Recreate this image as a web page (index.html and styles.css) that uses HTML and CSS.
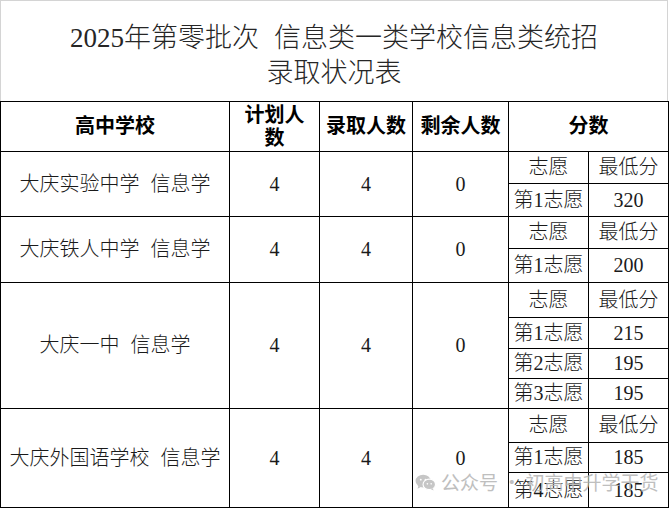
FILE: index.html
```html
<!DOCTYPE html>
<html lang="zh-CN">
<head>
<meta charset="utf-8">
<link rel="stylesheet" href="styles.css">
</head>
<body>
<div class="page">
  <div class="title">
    <div>2025年第零批次<span class="gap"></span>信息类一类学校信息类统招</div>
    <div>录取状况表</div>
  </div>
  <table class="grid">
    <colgroup>
      <col class="c-school"><col class="c-plan"><col class="c-admit"><col class="c-left"><col class="c-wish"><col class="c-score">
    </colgroup>
    <thead>
      <tr class="h-head">
        <th>高中学校</th>
        <th class="narrow">计划人数</th>
        <th>录取人数</th>
        <th>剩余人数</th>
        <th colspan="2">分数</th>
      </tr>
    </thead>
    <tbody>
      <tr class="h32">
        <td rowspan="2" class="school">大庆实验中学<span class="gap"></span>信息学</td>
        <td rowspan="2">4</td>
        <td rowspan="2">4</td>
        <td rowspan="2">0</td>
        <td>志愿</td><td>最低分</td>
      </tr>
      <tr class="h33"><td>第1志愿</td><td>320</td></tr>

      <tr class="h32">
        <td rowspan="2" class="school">大庆铁人中学<span class="gap"></span>信息学</td>
        <td rowspan="2">4</td>
        <td rowspan="2">4</td>
        <td rowspan="2">0</td>
        <td>志愿</td><td>最低分</td>
      </tr>
      <tr class="h34"><td>第1志愿</td><td>200</td></tr>

      <tr class="h35">
        <td rowspan="4" class="school">大庆一中<span class="gap"></span>信息学</td>
        <td rowspan="4">4</td>
        <td rowspan="4">4</td>
        <td rowspan="4">0</td>
        <td>志愿</td><td>最低分</td>
      </tr>
      <tr class="h31"><td>第1志愿</td><td>215</td></tr>
      <tr class="h30"><td>第2志愿</td><td>195</td></tr>
      <tr class="h30"><td>第3志愿</td><td>195</td></tr>

      <tr class="h34">
        <td rowspan="3" class="school">大庆外国语学校<span class="gap"></span>信息学</td>
        <td rowspan="3">4</td>
        <td rowspan="3">4</td>
        <td rowspan="3">0</td>
        <td>志愿</td><td>最低分</td>
      </tr>
      <tr class="h30"><td>第1志愿</td><td>185</td></tr>
      <tr class="h35"><td>第4志愿</td><td>185</td></tr>
    </tbody>
  </table>

  <div class="watermark">
    <svg class="wx" viewBox="0 0 22 18" width="21" height="17" aria-hidden="true">
      <ellipse cx="8.5" cy="7.5" rx="8" ry="6.8" fill="#bdbdbd"/>
      <path d="M3.5 12.5 L2.6 15.6 L6.4 13.6 Z" fill="#bdbdbd"/>
      <ellipse cx="15" cy="11" rx="6.6" ry="5.6" fill="#bdbdbd" stroke="#ffffff" stroke-width="1.2"/>
      <path d="M18.6 15 L19.6 17.6 L16.4 16 Z" fill="#bdbdbd"/>
      <circle cx="6" cy="6" r="1" fill="#ffffff"/>
      <circle cx="11" cy="6" r="1" fill="#ffffff"/>
      <circle cx="13" cy="10.4" r="0.85" fill="#ffffff"/>
      <circle cx="17" cy="10.4" r="0.85" fill="#ffffff"/>
    </svg>
    <span class="wm-text">公众号 · 初高中升学干货</span>
  </div>
</div>
</body>
</html>
```

FILE: styles.css
```css
* { box-sizing: border-box; }
html, body { margin: 0; padding: 0; background: #ffffff; }
body {
  font-family: "Liberation Serif", "Noto Sans CJK SC", serif;
  color: #1a1a1a;
}
.page {
  position: relative;
  width: 669px;
  height: 508px;
  overflow: hidden;
}
.gap { display: inline-block; width: 0.55em; }
.title {
  height: 101px;
  width: 668px;
  border: 1px solid #d4d4d4;
  border-bottom: none;
  padding-top: 10px;
  display: flex;
  flex-direction: column;
  align-items: center;
  justify-content: center;
  font-size: 27px;
  line-height: 35px;
  font-weight: 300;
  color: #262626;
}
.grid {
  border-collapse: collapse;
  table-layout: fixed;
  width: 668px;
}
.c-school { width: 229px; }
.c-plan { width: 90px; }
.c-admit { width: 93px; }
.c-left { width: 96px; }
.c-wish { width: 80px; }
.c-score { width: 80px; }
.grid th, .grid td {
  border: 1px solid #000;
  padding: 0 4px;
  text-align: center;
  vertical-align: middle;
  font-size: 20px;
  line-height: 23px;
  font-weight: 300;
  white-space: nowrap;
}
.grid th {
  font-weight: 700;
  color: #000;
  line-height: 23px;
}
.grid th.narrow { white-space: normal; padding: 1px 9px 0; }
.grid td.school { padding: 0 2px; }
.h-head { height: 50px; }
.h30 { height: 30px; }
.h31 { height: 31px; }
.h32 { height: 32px; }
.h33 { height: 33px; }
.h34 { height: 34px; }
.h35 { height: 35px; }

.watermark {
  position: absolute;
  left: 415px;
  top: 471px;
  display: flex;
  align-items: center;
  gap: 5px;
  white-space: nowrap;
  opacity: 0.85;
}
.wm-text {
  font-family: "Noto Sans CJK SC", sans-serif;
  font-size: 19px;
  line-height: 22px;
  color: #b4b4b4;
  white-space: nowrap;
}
```
